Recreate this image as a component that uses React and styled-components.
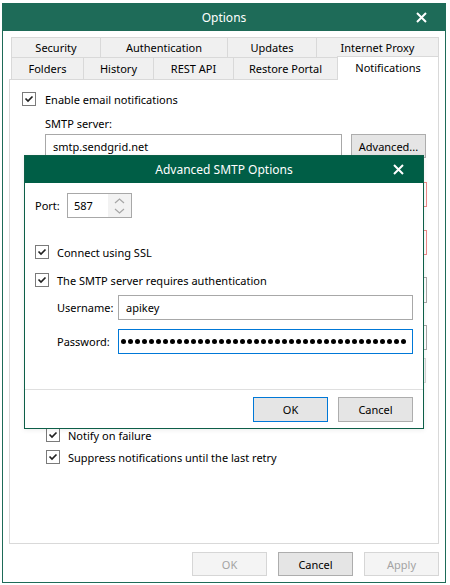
import React from 'react';
import styled, { createGlobalStyle } from 'styled-components';

const GlobalStyle = createGlobalStyle`
    body {
        margin: 0;
        background: #fff;
    }
`

const Root = styled.div`
    width: 450px;
    height: 585px;
    position: relative;
    overflow: hidden;
    background: #fff;
    padding: 3px 0 0 2px;
    box-sizing: border-box;
    font-family: "Noto Sans", "Liberation Sans", sans-serif;
    font-size: 11px;
    color: #000;
`

const Window = styled.div`
    width: 444px;
    height: 580px;
    border: 1px solid #1e6b58;
    box-sizing: border-box;
    display: flex;
    flex-direction: column;
    background: #fff;
`

const TitleBar = styled.div`
    height: 27px;
    flex-shrink: 0;
    display: grid;
    grid-template-columns: 1fr auto 1fr;
    align-items: center;
    background: ${props => props.$bg};
    color: #fff;
    font-size: 12px;
`

const TitleText = styled.div`
    grid-column: 2;
`

const CloseBox = styled.div`
    grid-column: 3;
    justify-self: end;
    display: flex;
    padding-right: ${props => props.$right + 'px'};
`

const Body = styled.div`
    flex: 1;
    display: flex;
    flex-direction: column;
    padding: 6px 6px 0 6px;
`

const TabRow = styled.div`
    display: flex;
    align-items: flex-end;
    height: ${props => props.$h + 'px'};
    margin-left: 2px;
    margin-top: ${props => props.$first ? '0' : '-1px'};
`

const Tab = styled.div`
    width: ${props => props.$w + 'px'};
    height: ${props => props.$active ? '24px' : '100%'};
    margin-left: -1px;
    margin-bottom: ${props => props.$active ? '-1px' : '0'};
    box-sizing: border-box;
    border: 1px solid #d9d9d9;
    border-bottom: ${props => props.$open ? 'none' : '1px solid #d9d9d9'};
    background: ${props => props.$active ? '#fff' : '#f0f0f0'};
    display: flex;
    align-items: center;
    justify-content: center;
    padding-bottom: ${props => props.$active ? '2px' : '0'};
    position: relative;
    z-index: ${props => props.$active ? 1 : 0};
    &:first-child {
        margin-left: 0;
    }
`

const Panel = styled.div`
    flex: 1;
    border: 1px solid #d9d9d9;
    background: #fff;
    padding: 12px 11px 0 12px;
    display: flex;
    flex-direction: column;
`

const CheckRow = styled.div`
    display: flex;
    align-items: center;
    gap: ${props => (props.$gap || 9) + 'px'};
    height: 14px;
    margin-top: ${props => (props.$top || 0) + 'px'};
    margin-left: ${props => (props.$left || 0) + 'px'};
    white-space: nowrap;
`

const Box = styled.div`
    width: 14px;
    height: 14px;
    flex-shrink: 0;
    box-sizing: border-box;
    border: 1px solid #7a7a7a;
    background: #fff;
    display: flex;
    align-items: center;
    justify-content: center;
`

const FieldLabel = styled.div`
    margin: 10px 0 0 23px;
    line-height: 15px;
`

const ServerRow = styled.div`
    display: flex;
    gap: 9px;
    margin: 3px 0 0 23px;
`

const Input = styled.div`
    height: ${props => (props.$h || 25) + 'px'};
    width: ${props => props.$w ? props.$w + 'px' : 'auto'};
    box-sizing: border-box;
    border: 1px solid ${props => props.$border || '#a8a8a8'};
    background: #fff;
    display: flex;
    align-items: center;
    justify-content: ${props => props.$right ? 'flex-end' : 'flex-start'};
    padding: 0 ${props => props.$right ? '2px' : '6px'} 0 ${props => (props.$padLeft ?? 7) + 'px'};
    overflow: hidden;
    white-space: nowrap;
    min-width: 0;
`

const Button = styled.div`
    width: ${props => (props.$w || 75) + 'px'};
    height: ${props => (props.$h || 25) + 'px'};
    box-sizing: border-box;
    flex-shrink: 0;
    border: 1px solid ${props => props.$primary ? '#0078d7' : props.$disabled ? '#d6d6d6' : '#adadad'};
    background: ${props => props.$disabled ? '#f4f4f4' : '#e5e5e5'};
    color: ${props => props.$disabled ? '#a3a3a3' : '#000'};
    display: flex;
    align-items: center;
    justify-content: center;
`

const FormRow = styled.div`
    display: grid;
    grid-template-columns: 75px 1fr;
    align-items: center;
    margin: ${props => props.$top + 'px'} 0 0 23px;
`

const Footer = styled.div`
    height: 38px;
    flex-shrink: 0;
    display: flex;
    justify-content: flex-end;
    gap: 11px;
    padding: 8px 6px 6px 0;
    box-sizing: border-box;
`

const Dialog = styled.div`
    position: absolute;
    left: 24px;
    top: 155px;
    width: 400px;
    height: 274px;
    box-sizing: border-box;
    border: 1px solid #0d5f48;
    background: #fff;
    display: flex;
    flex-direction: column;
    box-shadow: 0 1px 5px rgba(0, 0, 0, 0.08);
`

const DialogBody = styled.div`
    flex: 1;
    padding: 10px 10px 0 10px;
    display: flex;
    flex-direction: column;
`

const PortRow = styled.div`
    display: flex;
    align-items: center;
`

const PortLabel = styled.div`
    width: 32px;
`

const Spinner = styled.div`
    width: 65px;
    height: 25px;
    box-sizing: border-box;
    border: 1px solid #a8a8a8;
    display: flex;
`

const SpinValue = styled.div`
    flex: 1;
    display: flex;
    align-items: center;
    padding-left: 6px;
`

const SpinArrows = styled.div`
    width: 23px;
    background: #f2f2f2;
    display: flex;
    flex-direction: column;
    align-items: center;
    justify-content: center;
    gap: 4px;
`

const FieldGrid = styled.div`
    display: grid;
    grid-template-columns: 61px 1fr;
    row-gap: 9px;
    align-items: center;
    margin: 8px 0 0 22px;
`

const Dots = styled.div`
    flex: 1;
    min-width: 0;
    display: flex;
    justify-content: flex-end;
    gap: 2px;
    overflow: hidden;
`

const Dot = styled.span`
    width: 5px;
    height: 5px;
    border-radius: 50%;
    background: #000;
    flex-shrink: 0;
`

const DialogFooter = styled.div`
    height: 39px;
    flex-shrink: 0;
    box-sizing: border-box;
    border-top: 1px solid #dfdfdf;
    display: flex;
    justify-content: flex-end;
    gap: 10px;
    padding: 7px 10px 0;
`

const Check = () => (
    <svg width="10" height="10" viewBox="0 0 10 10">
        <polyline points="1.5,4.5 4,7 8.5,2.5" fill="none" stroke="#222" strokeWidth="1.7" />
    </svg>
)

const CheckItem = ({ children, ...rest }) => (
    <CheckRow {...rest}>
        <Box><Check /></Box>
        <span>{children}</span>
    </CheckRow>
)

const CloseIcon = () => (
    <svg width="11" height="11" viewBox="0 0 11 11">
        <path d="M1 1 L10 10 M10 1 L1 10" stroke="#fff" strokeWidth="2" />
    </svg>
)

const Chevron = ({ up }) => (
    <svg width="11" height="6" viewBox="0 0 11 6">
        <polyline points={up ? '1,5 5.5,1 10,5' : '1,1 5.5,5 10,1'} fill="none" stroke="#a6a6a6" strokeWidth="1.2" />
    </svg>
)

const topTabs = [
    { label: 'Security', w: 90 },
    { label: 'Authentication', w: 128 },
    { label: 'Updates', w: 90 },
    { label: 'Internet Proxy', w: 123 },
];

const bottomTabs = [
    { label: 'Folders', w: 73 },
    { label: 'History', w: 71 },
    { label: 'REST API', w: 81 },
    { label: 'Restore Portal', w: 105 },
    { label: 'Notifications', w: 102, active: true },
];

// rows of the notifications page that sit under the dialog; only their right ends show
const hiddenRows = [
    { top: 24, border: '#ee8a8a' },
    { top: 23, border: '#ee8a8a' },
    { top: 22, h: 26, text: 'objects)' },
    { top: 22 },
];

const App = () => {
    return (
        <Root>
            <GlobalStyle />
            <Window>
                <TitleBar $bg="#1e6b58">
                    <TitleText>Options</TitleText>
                    <CloseBox $right={18}><CloseIcon /></CloseBox>
                </TitleBar>
                <Body>
                    <TabRow $h={21} $first>
                        {topTabs.map(tab => (
                            <Tab key={tab.label} $w={tab.w}>{tab.label}</Tab>
                        ))}
                    </TabRow>
                    <TabRow $h={22}>
                        {bottomTabs.map(tab => (
                            <Tab key={tab.label} $w={tab.w} $active={tab.active} $open>{tab.label}</Tab>
                        ))}
                    </TabRow>
                    <Panel>
                        <CheckItem>Enable email notifications</CheckItem>
                        <FieldLabel>SMTP server:</FieldLabel>
                        <ServerRow>
                            <Input $w={297} $h={24}>smtp.sendgrid.net</Input>
                            <Button $h={24}>Advanced...</Button>
                        </ServerRow>
                        {hiddenRows.map((row, i) => (
                            <FormRow key={i} $top={row.top}>
                                <span />
                                <Input $h={row.h} $border={row.border} $right={!!row.text}>{row.text}</Input>
                            </FormRow>
                        ))}
                        <FormRow $top={8}>
                            <span />
                            <Button $w={306} $disabled />
                        </FormRow>
                        <CheckItem $top={45} $left={24} $gap={8}>Notify on failure</CheckItem>
                        <CheckItem $top={8} $left={24} $gap={8}>Suppress notifications until the last retry</CheckItem>
                    </Panel>
                </Body>
                <Footer>
                    <Button $h={24} $disabled>OK</Button>
                    <Button $h={24}>Cancel</Button>
                    <Button $h={24} $disabled>Apply</Button>
                </Footer>
            </Window>

            <Dialog>
                <TitleBar $bg="#005e46">
                    <TitleText>Advanced SMTP Options</TitleText>
                    <CloseBox $right={19}><CloseIcon /></CloseBox>
                </TitleBar>
                <DialogBody>
                    <PortRow>
                        <PortLabel>Port:</PortLabel>
                        <Spinner>
                            <SpinValue>587</SpinValue>
                            <SpinArrows>
                                <Chevron up />
                                <Chevron />
                            </SpinArrows>
                        </Spinner>
                    </PortRow>
                    <CheckItem $top={27} $gap={8}>Connect using SSL</CheckItem>
                    <CheckItem $top={14} $gap={8}>The SMTP server requires authentication</CheckItem>
                    <FieldGrid>
                        <span>Username:</span>
                        <Input>apikey</Input>
                        <span>Password:</span>
                        <Input $border="#0078d7" $padLeft={1}>
                            <Dots>
                                {Array.from({ length: 48 }).map((_, i) => <Dot key={i} />)}
                            </Dots>
                        </Input>
                    </FieldGrid>
                </DialogBody>
                <DialogFooter>
                    <Button $primary>OK</Button>
                    <Button>Cancel</Button>
                </DialogFooter>
            </Dialog>
        </Root>
    )
}

export default App;
